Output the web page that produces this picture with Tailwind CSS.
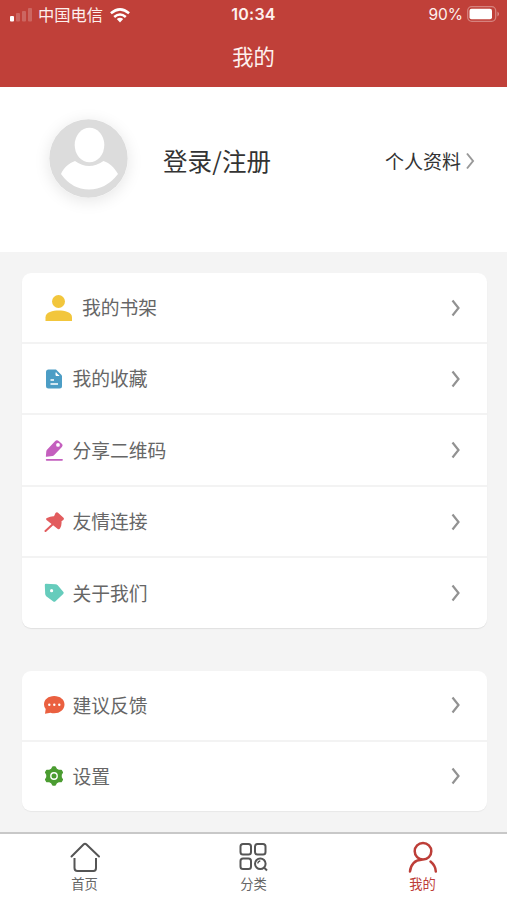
<!DOCTYPE html>
<html lang="zh-CN">
<head>
<meta charset="utf-8">
<title>我的</title>
<script src="https://cdn.jsdelivr.net/npm/@tailwindcss/browser@4"></script>
</head>
<body class="w-[507px] h-[900px] overflow-hidden bg-[#f4f4f4] flex flex-col font-['Liberation_Sans','Noto_Sans_CJK_SC',sans-serif]">
<header class="h-[87px] shrink-0 bg-[#c04039] text-[#fdf0ee]">
  <div class="h-[30px] grid grid-cols-3 items-center pl-[10px] pr-[8px]">
    <div class="flex items-center">
      <svg class="w-[23px] h-[14px]" viewBox="0 0 23 14"><rect x="0" y="8" width="4" height="5.500" rx="1" fill="#fff"/><g fill="#fff" opacity=".2"><rect x="6" y="5" width="4" height="8.500" rx="1"/><rect x="12" y="3" width="4" height="10.500" rx="1"/><rect x="18" y="0" width="4" height="13.500" rx="1"/></g></svg>
      <span class="ml-[5px] text-[16.300px] leading-[30px] whitespace-nowrap">中国电信</span>
      <svg class="ml-[7px] w-[20px] h-[15px]" viewBox="0 0 20 15" fill="none" stroke="#fff" stroke-width="2.500"><path d="M.9 5.300Q10-2.600 19.100 5.300M4.200 9Q10 3.900 15.800 9"/><path d="M10 14.400 6.800 11.100Q10 8.400 13.200 11.100Z" fill="#fff" stroke="none"/></svg>
    </div>
    <div class="text-center text-[16px] leading-[28px] pb-[2px] font-semibold tracking-[.2px] -ml-[2px] font-['Inter',sans-serif]">10:34</div>
    <div class="flex items-center justify-end">
      <span class="text-[15.500px] leading-[30px] font-['Inter',sans-serif]">90%</span>
      <svg class="ml-[4px] -mr-[1px] w-[33px] h-[16px] -mt-[2px]" viewBox="0 0 33 16"><rect x=".7" y=".7" width="28" height="14.600" rx="4" fill="none" stroke="#fff" stroke-opacity=".35" stroke-width="1.300"/><rect x="2.500" y="2.700" width="22.500" height="10.600" rx="2" fill="#fff"/><path d="M30.500 5.500q3 2.500 0 5z" fill="#fff" opacity=".45"/></svg>
    </div>
  </div>
  <h1 class="h-[54px] text-center text-[21.300px] leading-[56px]">我的</h1>
</header>

<section class="h-[165px] shrink-0 bg-white flex items-center pl-[49px] pr-[31px] pb-[16px] text-[#333]">
  <div class="size-[79px] -mt-[6px] rounded-full shadow-[0_3px_16px_rgba(0,0,0,.1)]">
    <svg class="size-[79px]" viewBox="0 0 79 79"><circle cx="39.500" cy="39.500" r="39.200" fill="#dcdcdc"/><ellipse cx="40.500" cy="26" rx="14.800" ry="17.300" fill="#fff"/><path d="M26 42C20 44 14.500 49 12 55Q23 70.500 40 70.500T69 55C65.500 49 61 44 54.500 42Q40 52 26 42Z" fill="#fff"/></svg>
  </div>
  <span class="ml-[35px] text-[24.500px] leading-[34px] pb-[1px] tracking-[.1px] font-['Noto_Sans_CJK_SC',sans-serif]">登录/注册</span>
  <span class="ml-auto text-[19px] leading-[28px] pt-[2px]">个人资料</span>
  <svg class="ml-[3px] w-[12px] h-[18px] -mt-[1px]" viewBox="0 0 12 18" fill="none" stroke="#999" stroke-width="2"><path d="m3 1.500 6 7.500-6 7.500"/></svg>
</section>

<main class="px-[21px] pt-[21px] h-[580px] shrink-0 text-[#666] text-[18.800px]">
  <div class="ml-[.5px] w-[465px] h-[355px] bg-white rounded-[9px] shadow-[0_1px_1px_rgba(0,0,0,.08)] divide-y-2 divide-[#f3f3f3] grid grid-rows-[71px_71px_72px_71px_70px]">
    <div class="flex items-center pl-[23px] pr-[25px]">
      <svg class="w-[28px] h-[28px]" viewBox="0 0 28 28" fill="#f2c63c"><circle cx="13.500" cy="7.500" r="6.500"/><path d="M.5 27v-3.500C.5 18 8 16.500 13.700 16.500S27 18 27 23.500V27z"/></svg>
      <span class="ml-[9.500px] pt-[2px] leading-[28px]">我的书架</span>
      <svg class="ml-auto w-[12px] h-[20px]" viewBox="0 0 12 20" fill="none" stroke="#929292" stroke-width="2.200"><path d="m2.500 2.500 6 7.500-6 7.500"/></svg>
    </div>
    <div class="flex items-center pl-[22.500px] pr-[25px]">
      <svg class="w-[20px] h-[20px]" viewBox="0 0 20 20"><path d="M4.500.5H12L18 6.500V17q0 2.500-2.500 2.500h-11Q2 19.500 2 17V3Q2 .5 4.500.5Z" fill="#4c9dc5"/><path d="M12 3.500v3h3.200" fill="#fff" stroke="#fff" stroke-width="1"/><path d="M6.500 11H10M6.500 15h7.500" fill="none" stroke="#fff" stroke-width="1.500"/></svg>
      <span class="ml-[8.500px] pt-[3px] leading-[28px]">我的收藏</span>
      <svg class="ml-auto w-[12px] h-[20px]" viewBox="0 0 12 20" fill="none" stroke="#929292" stroke-width="2.200"><path d="m2.500 2.500 6 7.500-6 7.500"/></svg>
    </div>
    <div class="flex items-center pl-[22.500px] pr-[25px]">
      <svg class="w-[20px] h-[21px]" viewBox="0 0 20 21"><path d="M2.500 16.800Q1.800 17 1.900 16.200L2.300 11.300Q2.400 10.500 3 9.800L11 1.300Q12.800-.5 14.700 1L17.800 3.700Q19.300 5.200 17.900 7L10 15.200Q9.400 15.900 8.500 16Z" fill="#c45fbe"/><circle cx="14" cy="4.900" r="1.900" fill="#fff"/><path d="M2.700 19.800h15.300" stroke="#c45fbe" stroke-width="1.800" stroke-linecap="round"/></svg>
      <span class="ml-[8.500px] pt-[3px] leading-[28px]">分享二维码</span>
      <svg class="ml-auto w-[12px] h-[20px]" viewBox="0 0 12 20" fill="none" stroke="#929292" stroke-width="2.200"><path d="m2.500 2.500 6 7.500-6 7.500"/></svg>
    </div>
    <div class="flex items-center pl-[22.500px] pr-[25px]">
      <svg class="w-[20px] h-[20px]" viewBox="0 0 20 20"><path d="M11.500 1Q13-.3 14.300 1L19.500 5.700q1 1.200-.2 2.200l-1.800 1.300q.5 3.800-1.500 7.300-1 1.400-2.200.4L2.500 8q-1.200-1.600.5-2.100Q6.500 4 10 4.200Z" fill="#e25c5e"/><path d="m8.500 12.500-7 6.500" stroke="#e25c5e" stroke-width="2" stroke-linecap="round"/></svg>
      <span class="ml-[8.500px] pt-[3px] leading-[28px]">友情连接</span>
      <svg class="ml-auto w-[12px] h-[20px]" viewBox="0 0 12 20" fill="none" stroke="#929292" stroke-width="2.200"><path d="m2.500 2.500 6 7.500-6 7.500"/></svg>
    </div>
    <div class="flex items-center pl-[22.500px] pr-[25px]">
      <svg class="w-[20px] h-[20px]" viewBox="0 0 20 20"><path d="M2 .7 11.500 1.300Q12.700 1.400 13.700 2.300L19.200 8.700q1 1.100 0 2.200l-7.700 7.300q-1.200 1-2.500 0L2.200 13.200q-1-1.200-1-2.200L.8 2Q.8.700 2 .7Z" fill="#66ccbc"/><circle cx="7.600" cy="7.700" r="1.600" fill="#fff"/></svg>
      <span class="ml-[8.500px] pt-[3px] leading-[28px]">关于我们</span>
      <svg class="ml-auto w-[12px] h-[20px]" viewBox="0 0 12 20" fill="none" stroke="#929292" stroke-width="2.200"><path d="m2.500 2.500 6 7.500-6 7.500"/></svg>
    </div>
  </div>
  <div class="mt-[43px] ml-[.5px] w-[465px] h-[140px] bg-white rounded-[9px] shadow-[0_1px_1px_rgba(0,0,0,.05)] divide-y-2 divide-[#f3f3f3] grid grid-rows-[71px_69px]">
    <div class="flex items-center pl-[22.500px] pr-[25px]">
      <svg class="w-[21px] h-[20px] -mt-[1px]" viewBox="0 0 21 20"><path d="M1 18.700 1.700 14Q0 12 0 9.500C0 4.500 4.300 1 10.200 1S20.500 4.500 20.500 9.500 16 18.300 10.200 18.300q-2 0-3.700-.6Z" fill="#ea6040"/><g fill="#fff"><circle cx="5.300" cy="9.800" r="1.200"/><circle cx="10.300" cy="9.800" r="1.200"/><circle cx="15.300" cy="9.800" r="1.200"/></g></svg>
      <span class="ml-[7.500px] pt-[2px] leading-[28px]">建议反馈</span>
      <svg class="ml-auto w-[12px] h-[20px] -mt-[1px]" viewBox="0 0 12 20" fill="none" stroke="#929292" stroke-width="2.200"><path d="m2.500 2.500 6 7.500-6 7.500"/></svg>
    </div>
    <div class="flex items-center pl-[22.500px] pr-[25px]">
      <svg class="w-[20px] h-[20px] -mt-[1px]" viewBox="0 0 20 20"><path d="M8.800 1h2.400l1.300 2.300 2 1.100 2.700-.1 1.200 2.100-1.300 2.400v2.400l1.300 2.400-1.200 2.100-2.700-.1-2 1.100L11.200 19H8.800l-1.300-2.300-2-1.100-2.700.1-1.200-2.100 1.300-2.400V8.800L1.600 6.400l1.200-2.100 2.700.1 2-1.100Z" fill="#4b9c31" stroke="#4b9c31" stroke-width="1.300" stroke-linejoin="round"/><circle cx="10" cy="10" r="3.200" fill="none" stroke="#fff" stroke-width="1.400"/></svg>
      <span class="ml-[8.500px] pt-[2px] leading-[28px]">设置</span>
      <svg class="ml-auto w-[12px] h-[20px] -mt-[1px]" viewBox="0 0 12 20" fill="none" stroke="#929292" stroke-width="2.200"><path d="m2.500 2.500 6 7.500-6 7.500"/></svg>
    </div>
  </div>
</main>

<nav class="h-[68px] shrink-0 bg-white border-t-2 border-[#c8c8c8] grid grid-cols-3 text-[13.300px] leading-[20px] text-[#666]">
  <div class="flex flex-col items-center pt-[7px]">
    <svg class="w-[32px] h-[32px]" viewBox="0 0 32 32" fill="none" stroke="#555" stroke-width="2"><path d="M2.500 15.500 14.500 3.500Q16 2 17.500 3.500L30 15.500" stroke-linecap="round"/><path d="M5.500 17v10q0 3 3 3h16q2.500 0 2.500-3V17"/></svg>
    <span class="pt-[2px]">首页</span>
  </div>
  <div class="flex flex-col items-center pt-[7px]">
    <svg class="w-[32px] h-[32px]" viewBox="0 0 32 32" fill="none" stroke="#555" stroke-width="2"><rect x="2.500" y="3" width="10.500" height="10.500" rx="2.500"/><rect x="17" y="3" width="10.500" height="10.500" rx="2.500"/><rect x="2.500" y="17.500" width="10.500" height="10.500" rx="2.500"/><circle cx="22.300" cy="22.700" r="5.300"/><path d="m26 26.500 3 3"/><path d="M19.800 22.500q.2-2.300 2.500-2.500" stroke-width="1.300"/></svg>
    <span class="pt-[2px]">分类</span>
  </div>
  <div class="flex flex-col items-center pt-[7px] text-[#bd3e38]">
    <svg class="w-[32px] h-[32px]" viewBox="0 0 32 32" fill="none" stroke="#bd3e38" stroke-width="2.500" stroke-linecap="round"><circle cx="16" cy="10.300" r="8.300"/><path d="M3 30.500C3.500 23.500 8 18.800 14.500 18.800M23.500 20.500Q28.500 24.500 28.800 30.500"/></svg>
    <span class="pt-[2px]">我的</span>
  </div>
</nav>
</body>
</html>
